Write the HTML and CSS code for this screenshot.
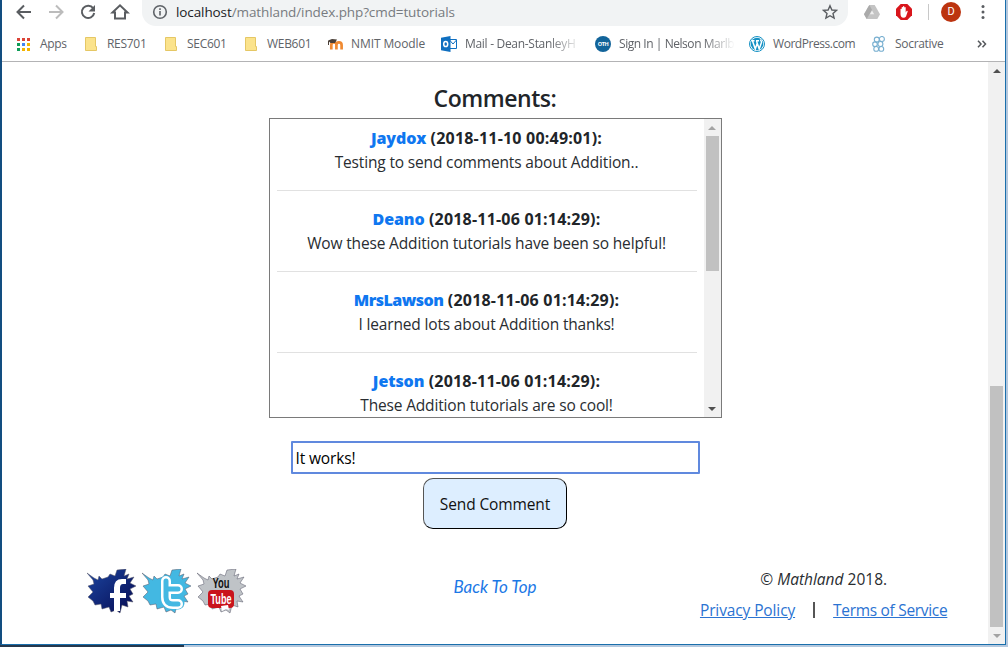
FILE: index.html
```html
<!DOCTYPE html>
<html lang="en">
<head>
<meta charset="utf-8">
<title>Mathland - Tutorials</title>
<link rel="stylesheet" href="styles.css">
</head>
<body>
<div class="window">
  <header class="chrome">
    <div class="toolbar">
      <svg class="nav-icon" viewBox="0 0 20 20"><path d="M17 10H4M10 3.500 3.500 10l6.500 6.500" /></svg>
      <svg class="nav-icon off" viewBox="0 0 20 20"><path d="M3 10h13M10 3.500l6.500 6.500-6.500 6.500"/></svg>
      <svg class="nav-icon" viewBox="0 0 20 20"><path d="M15.200 6.300A6.200 6.200 0 1 0 16.200 11"/><path class="fill" d="M17 3v6.500h-6.500z"/></svg>
      <svg class="nav-icon" viewBox="0 0 20 20"><path d="M2.500 10.500 10 3.300l7.500 7.200H15v6H5v-6z"/></svg>
      <div class="address">
        <svg class="info" viewBox="0 0 16 16"><circle cx="8" cy="8" r="6.300"/><path d="M8 7v4.500M8 4.300v1.600"/></svg>
        <span class="url"><span class="host">localhost</span>/mathland/index.php?cmd=tutorials</span>
        <svg class="star" viewBox="0 0 16 16"><path d="M8 1.700 9.900 6l4.700.4-3.600 3.100 1.100 4.600L8 11.700l-4.100 2.400L5 9.500 1.400 6.400 6.100 6z"/></svg>
      </div>
      <svg class="drive" viewBox="0 0 16 14"><path fill="#c4c4c4" d="M5.300 0h5.400L16 9.300 13.300 14H2.700L0 9.300z"/><path fill="#aaa" d="M5.300 0 8 4.700 2.700 14 0 9.300z"/><path fill="#eee" d="M8 5.500l2.200 3.800H5.800z"/></svg>
      <svg class="adblock" viewBox="0 0 16 16"><path fill="#d9161c" d="M4.700 0h6.600L16 4.700v6.600L11.300 16H4.700L0 11.300V4.700z"/><path fill="#fff" d="M4.500 5q1-.6 1.200.2V3.300q.8-.8 1.300 0V2.400q.8-.8 1.300 0v1q.9-.7 1.400 0v5l1-1.700q1.200-.2 1 .7L10 12.500q-.8 1.200-2.500 1.200Q4.500 13.500 4.500 10z"/></svg>
      <span class="divider"></span>
      <span class="avatar">D</span>
      <svg class="menu" viewBox="0 0 4 16"><circle cx="2" cy="2.500" r="1.500"/><circle cx="2" cy="8" r="1.500"/><circle cx="2" cy="13.500" r="1.500"/></svg>
    </div>
    <nav class="bookmarks">
      <a class="bm b-apps"><svg viewBox="0 0 16 16"><path fill="#db4437" d="M2 2h3v3H2zM7 2h3v3H7zM12 2h3v3h-3z"/><path fill="#0f9d58" d="M2 7h3v3H2zM2 12h3v3H2z"/><path fill="#4285f4" d="M7 7h3v3H7z"/><path fill="#f4b400" d="M12 7h3v3h-3zM7 12h3v3H7zM12 12h3v3h-3z"/></svg><span>Apps</span></a>
      <a class="bm b-folder"><svg viewBox="0 0 16 16"><path fill="#fbe38c" stroke="#e5c765" d="M2.500 1.500h10v9h1v4h-11z"/></svg><span>RES701</span></a>
      <a class="bm b-folder"><svg viewBox="0 0 16 16"><path fill="#fbe38c" stroke="#e5c765" d="M2.500 1.500h10v9h1v4h-11z"/></svg><span>SEC601</span></a>
      <a class="bm b-web"><svg viewBox="0 0 16 16"><path fill="#fbe38c" stroke="#e5c765" d="M2.500 1.500h10v9h1v4h-11z"/></svg><span>WEB601</span></a>
      <a class="bm b-moodle"><svg viewBox="0 0 16 16"><path fill="none" stroke="#f08a32" stroke-width="2.700" d="M4.300 13.500V9q0-2.600 2.600-2.600T9.400 9v4.500M9.400 9q0-2.600 2.600-2.600T14.600 9v4.500"/><path fill="#4a4038" d="M1 4.500 5 3l5 .5L8 7 3.500 7zM1 5h1v4H1z"/></svg><span>NMIT Moodle</span></a>
      <a class="bm b-mail"><svg viewBox="0 0 16 16"><path fill="#fff" stroke="#0f6fc0" d="M8 3.500h7.500v9H8zM8.500 4l3.500 4 3.500-4"/><path fill="#0f6fc0" d="M0 1.800 9.500 0v16L0 14.200z"/><ellipse cx="4.700" cy="8" rx="2" ry="2.600" fill="none" stroke="#fff" stroke-width="1.500"/></svg><span>Mail - Dean-StanleyH</span></a>
      <a class="bm b-sign"><svg viewBox="0 0 16 16"><circle cx="8" cy="8" r="8" fill="#12649a"/><text x="8" y="10.200" font-size="5.500" font-weight="700" fill="#fff" text-anchor="middle">OTH</text></svg><span>Sign In | Nelson Marlb</span></a>
      <a class="bm b-wp"><svg viewBox="0 0 16 16"><circle cx="8" cy="8" r="7.500" fill="#fff" stroke="#1591c4"/><circle cx="8" cy="8" r="6.300" fill="#1591c4"/><path fill="none" stroke="#fff" stroke-width="1.500" d="M2.500 4.700h3M7 4.700h3M3.500 5l2.800 8L8.300 7M7.500 5l2.700 8 2.400-7-1.200-2.500"/></svg><span>WordPress.com</span></a>
      <a class="bm b-soc"><svg viewBox="0 0 16 16"><g fill="none" stroke="#78afd0" stroke-width="1.100"><circle cx="5.800" cy="3.600" r="2.500"/><circle cx="10.900" cy="3" r="2.500"/><circle cx="4" cy="8.200" r="2.300"/><circle cx="9.400" cy="8" r="2.500"/><circle cx="5.200" cy="12.900" r="2.400"/><circle cx="10.300" cy="12.900" r="2.400"/></g></svg><span>Socrative</span></a>
      <svg class="more" viewBox="0 0 10 8"><path d="M1 .8 4 4 1 7.200M5.500.8l3 3.200-3 3.200"/></svg>
    </nav>
  </header>
  <div class="viewport">
    <main class="page">
      <h4 class="title">Comments:</h4>
      <section class="comments">
        <div class="list">
          <article class="comment"><p class="meta"><b>Jaydox</b> (2018-11-10 00:49:01):</p><p class="body">Testing to send comments about Addition..</p></article>
          <article class="comment"><p class="meta"><b>Deano</b> (2018-11-06 01:14:29):</p><p class="body">Wow these Addition tutorials have been so helpful!</p></article>
          <article class="comment"><p class="meta"><b class="long">MrsLawson</b> (2018-11-06 01:14:29):</p><p class="body">I learned lots about Addition thanks!</p></article>
          <article class="comment"><p class="meta"><b>Jetson</b> (2018-11-06 01:14:29):</p><p class="body">These Addition tutorials are so cool!</p></article>
        </div>
        <div class="scrollbar inner"><i class="arrow up dim"></i><i class="thumb"></i><i class="arrow down"></i></div>
      </section>
      <div class="field">It works!</div>
      <button class="send">Send Comment</button>
      <footer class="footer">
        <div class="social">
          <svg viewBox="0 0 50 46"><defs><linearGradient id="fb" x2="1" y2="1"><stop offset="0" stop-color="#1c45a0"/><stop offset="1" stop-color="#060a50"/></linearGradient></defs><path class="splat" fill="url(#fb)" d="M0 4 7 9 11 11 12 7 15 10 21 8 23 5 28 7 30 1 39 0 37 7 42 5 40 10 47 8 43 14 49 17 43 20 46 25 42 27 46 33 40 32 41 38 35 36 33 44 29 41 24 43 22 38 15 40 14 35 8 36 6 32 1 28 6 23 1 17 7 15 6 11z"/><path fill="#fff" d="M27 42V29h-4v-5h4v-5q0-9 8-9h4v5h-3q-3 0-3 4v5h6v5h-6v13z"/></svg>
          <svg viewBox="0 0 50 46"><path class="splat" fill="#43b8e2" d="M0 4 7 9 11 11 12 7 15 10 21 8 23 5 28 7 30 1 39 0 37 7 42 5 40 10 47 8 43 14 49 17 43 20 46 25 42 27 46 33 40 32 41 38 35 36 33 44 29 41 24 43 22 38 15 40 14 35 8 36 6 32 1 28 6 23 1 17 7 15 6 11z"/><g fill="none" stroke-linecap="round" stroke-linejoin="round"><path stroke="#43b8e2" stroke-width="13" d="M24 13v15q0 6 7 6h5"/><path stroke="#fff" stroke-width="10" d="M24 12v16q0 7 7 7h5M24 20h12"/><path stroke="#43b8e2" stroke-width="5" d="M24 12v16q0 7 7 7h5M24 20h12"/></g></svg>
          <svg viewBox="0 0 50 46"><path class="splat" fill="#bfc3c7" d="M0 4 7 9 11 11 12 7 15 10 21 8 23 5 28 7 30 1 39 0 37 7 42 5 40 10 47 8 43 14 49 17 43 20 46 25 42 27 46 33 40 32 41 38 35 36 33 44 29 41 24 43 22 38 15 40 14 35 8 36 6 32 1 28 6 23 1 17 7 15 6 11z"/><rect x="11" y="21" width="26" height="18" rx="4" fill="#c9141c"/><path fill="#fff" d="M24 37l7-1 1 5-3-1-4 2z"/><text class="yt" x="24" y="18.500" textLength="17" lengthAdjust="spacingAndGlyphs" fill="#111">You</text><text class="yt" x="24" y="35" textLength="21" lengthAdjust="spacingAndGlyphs" fill="#fff">Tube</text></svg>
        </div>
        <div class="top"><a>Back To Top</a></div>
        <div class="legal"><p class="copy">© <em>Mathland</em> 2018.</p><p class="links"><a>Privacy Policy</a><i class="bar"></i><a class="terms">Terms of Service</a></p></div>
      </footer>
    </main>
    <div class="scrollbar outer"><i class="arrow up"></i><i class="thumb"></i><i class="arrow down dim"></i></div>
  </div>
</div>
</body>
</html>
```
FILE: styles.css
```css
* { box-sizing: border-box; }
body { margin: 0; width: 1008px; height: 647px; overflow: hidden; font: 15.5px/24px "Open Sans", "Noto Sans", sans-serif; color: #292d31; background: linear-gradient(90deg, #26384c 184px, #b4c8de 184px); }
p, h4 { margin: 0; }
.window { width: 1006px; height: 645px; border: solid #1a6fac; border-width: 0 1px 1px 2px; border-left-color: #124d80; background: #fff; display: flex; flex-direction: column; }
.chrome { height: 62px; border-bottom: 1px solid #b3b3b5; flex: none; }
.toolbar { height: 26px; display: flex; align-items: flex-start; padding-left: 12px; }
.nav-icon { width: 20px; height: 20px; margin: 2px 12px 0 0; flex: none; fill: none; stroke: #5a5d61; stroke-width: 2; }
.nav-icon.off { stroke: #bcbcbc; }
.nav-icon .fill { fill: #5a5d61; stroke: none; }
.address { width: 706px; height: 26px; background: #f1f3f4; border-radius: 0 0 14px 14px; display: flex; align-items: center; padding: 0 10px; }
.info { width: 16px; height: 16px; margin-top: -2px; fill: none; stroke: #5f6368; stroke-width: 1.6; }
.url { margin: -2px 0 0 8px; font-size: 13.5px; letter-spacing: -.1px; color: #777b80; line-height: 24px; white-space: nowrap; }
.host { color: #202124; }
.star { width: 16px; height: 16px; margin: -2px 0 0 auto; fill: none; stroke: #5a5d61; stroke-width: 1.4; }
.drive { width: 16px; height: 14px; margin: 5px 0 0 16px; }
.adblock { width: 16px; height: 16px; margin: 4px 0 0 16px; }
.divider { width: 1px; height: 16px; margin: 4px 0 0 16px; background: #c8c8c8; }
.avatar { width: 20px; height: 20px; margin: 2px 0 0 12px; border-radius: 50%; background: #bc3410; color: #fff; font: 11px/20px Roboto, sans-serif; text-align: center; }
.menu { width: 4px; height: 16px; margin: 4px 0 0 20px; fill: #5a5d61; }
.bookmarks { height: 35px; display: flex; align-items: center; padding-left: 13px; font-size: 12px; letter-spacing: -.3px; color: #606368; }
.bm { display: flex; align-items: center; gap: 8px; white-space: nowrap; flex: none; }
.bm svg { width: 16px; height: 16px; flex: none; }
.bm svg text { font-family: "Open Sans", sans-serif; }
.b-apps { width: 68px; gap: 9px; }
.b-folder { width: 80px; }
.b-web { width: 84px; }
.b-moodle { width: 114px; letter-spacing: -.1px; }
.b-mail { width: 154px; }
.b-sign { width: 154px; letter-spacing: -.45px; }
.b-wp { width: 122px; letter-spacing: -.45px; }
.b-soc { width: 106px; }
.b-mail span, .b-sign span { -webkit-mask: linear-gradient(90deg, #000 84px, transparent 116px); mask: linear-gradient(90deg, #000 84px, transparent 116px); }
.more { width: 10px; height: 8px; fill: none; stroke: #55585c; stroke-width: 1.5; }
.viewport { flex: 1; display: flex; }
.page { width: 986px; display: flex; flex-direction: column; align-items: center; }
.title { margin-top: 22px; font-size: 23px; font-weight: 600; letter-spacing: -.45px; line-height: 29px; color: #212529; }
.comments { width: 453px; height: 300px; margin-top: 5px; border: 1px solid #7a7a7a; display: flex; overflow: hidden; }
.list { flex: 1; padding: 7px; text-align: center; }
.comment { height: 81px; border-bottom: 1px solid #e1e1e1; }
.comment:first-child { height: 65px; }
.comment + .comment { padding-top: 16px; }
.body { letter-spacing: -.16px; }
.meta { font-weight: 700; font-size: 16px; letter-spacing: .2px; color: #212529; }
.meta b { color: #0f77f0; font-weight: 800; letter-spacing: -.1px; }
.meta .long { letter-spacing: -.5px; }
.scrollbar { background: #f1f1f1; width: 17px; display: flex; flex-direction: column; align-items: center; flex: none; }
.thumb { width: 13px; background: #c1c1c1; }
.arrow { width: 17px; height: 17px; flex: none; display: flex; align-items: center; justify-content: center; }
.arrow::before { content: ""; border: 4px solid transparent; }
.up::before { border-top: 0; border-bottom-color: #505050; }
.down::before { border-bottom: 0; border-top-color: #505050; }
.up.dim::before { border-bottom-color: #a3a3a3; }
.down.dim::before { border-top-color: #a3a3a3; }
.down { margin-top: auto; }
.inner .thumb { height: 135px; }
.outer .thumb { margin-top: 307px; height: 241px; }
.field { width: 409px; height: 33px; margin-top: 23px; border: 2px solid #6089de; border-radius: 1px; padding: 3px 3px; color: #000; letter-spacing: -.15px; }
.send { width: 144px; height: 51px; margin-top: 4px; padding: 0; border: 1px solid #000; border-top-color: #555; border-left-color: #555; border-radius: 10px; background: #def; font: inherit; letter-spacing: -.12px; color: #111; }
.footer { width: 986px; margin-top: 38px; display: grid; grid-template-columns: repeat(3, 1fr); text-align: center; }
.social { display: flex; justify-content: center; gap: 5px; padding: 2px 0 0 1px; }
.social svg { width: 50px; height: 46px; }
.splat { stroke: #556; stroke-width: .5; }
.yt { font: 700 15px "Liberation Sans", sans-serif; text-anchor: middle; }
.top { padding-top: 8px; color: #1c78e6; font: italic 17px/24px Lato, sans-serif; }
.legal .links { margin-top: 7px; display: flex; justify-content: center; align-items: center; color: #2b73d2; letter-spacing: -.12px; text-decoration: underline; }
.legal .terms { letter-spacing: -.31px; }
.bar { width: 2px; height: 16px; margin: 0 18px; background: #555; }
```
